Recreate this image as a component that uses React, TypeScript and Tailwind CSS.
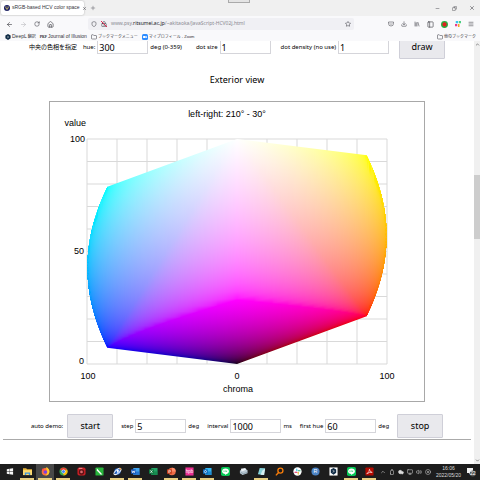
import React from "react";
import {
  ArrowLeft,
  ArrowRight,
  RotateCw,
  House,
  Shield,
  Star,
  Download,
  Menu,
  Minus,
  X,
  Plus,
  Folder,
  Library,
  PanelLeft,
  Copy,
  ChevronUp,
  ChevronDown,
  Cloud,
  Monitor,
  Volume2,
  Battery,
  CircleX,
  LockKeyhole,
} from "lucide-react";

const CENTER_HUE = 300;
const SIN60 = Math.sin(Math.PI / 3);

// fully saturated colour of a hue, in linear light
const pureColor = (hue: number) => {
  const h = (((hue % 360) + 360) % 360) / 60;
  const f = (n: number) => {
    const k = (n + h) % 6;
    return 1 - Math.max(0, Math.min(k, 4 - k, 1));
  };
  return [f(5), f(3), f(1)];
};

const luminance = (c: number[]) =>
  0.2126 * c[0] + 0.7152 * c[1] + 0.0722 * c[2];

const encode = (v: number) => {
  const c = Math.max(0, Math.min(1, v));
  const s = c <= 0.0031308 ? 12.92 * c : 1.055 * Math.pow(c, 1 / 2.4) - 0.055;
  return Math.round(s * 255);
};

const toCss = (c: number[]) => `rgb(${c.map(encode).join(",")})`;

const hueTable = Array.from({ length: 361 }, (_, i) => {
  const d = i - 180;
  const pure = pureColor(CENTER_HUE + d);
  return { sin: Math.sin((d * Math.PI) / 180), pure, lum: luminance(pure) };
});

const maxChroma = (lum: number, v: number) =>
  v <= lum ? v / lum : (1 - v) / (1 - lum);

// colour of the nearest surface point at (x, value)
const surfaceColor = (x: number, v: number) => {
  const dir = x < 0 ? -1 : 1;
  const target = Math.abs(x);
  let best = 0;
  let bestDist = Infinity;
  let prev = 0;
  let pos = 0;
  for (let i = 0; i <= 180; i++) {
    const e = hueTable[180 + dir * i];
    const f = maxChroma(e.lum, v) * Math.abs(e.sin);
    if (f >= target) {
      pos = i === 0 ? 0 : i - 1 + (target - prev) / (f - prev || 1);
      bestDist = 0;
      break;
    }
    if (target - f < bestDist) {
      bestDist = target - f;
      best = i;
    }
    prev = f;
  }
  if (bestDist > 0) pos = best;
  const pure = pureColor(CENTER_HUE + dir * pos);
  const lum = luminance(pure);
  const c = maxChroma(lum, v);
  return toCss(pure.map((p) => (v <= lum ? c * p : 1 - c * (1 - p))));
};

const valueRange = (x: number) => {
  const a = Math.abs(x);
  if (a <= SIN60) {
    const low = x < 0 ? 0.0722 : 0.2126;
    const high = x < 0 ? 0.7874 : 0.9278;
    return [(low * a) / SIN60, 1 - ((1 - high) * a) / SIN60];
  }
  const d = (Math.asin(a) * 180) / Math.PI;
  const dir = x < 0 ? -1 : 1;
  return [
    luminance(pureColor(CENTER_HUE + dir * d)),
    luminance(pureColor(CENTER_HUE + dir * (180 - d))),
  ];
};

const STOPS = 32;
const columns = Array.from({ length: 300 }, (_, i) => {
  const x = (i + 0.5 - 150) / 150;
  const [low, high] = valueRange(x);
  const stops = Array.from({ length: STOPS + 1 }, (_, k) => {
    const t = Math.pow(k / STOPS, 1.5);
    const v = low + (high - low) * Math.min(0.998, Math.max(0.002, t));
    return { offset: t, color: surfaceColor(x, v) };
  });
  // the blue-magenta-red ridge needs a stop of its own to stay sharp
  if (Math.abs(x) < SIN60) {
    const ridge = pureColor(CENTER_HUE + (Math.asin(x) * 180) / Math.PI);
    stops.push({
      offset: (luminance(ridge) - low) / (high - low),
      color: toCss(ridge),
    });
    stops.sort((a, b) => a.offset - b.offset);
  }
  return { i, low, high, stops };
});

const HcvChart = () => (
  <svg
    viewBox="0 0 376 301"
    className="block w-[376px]"
    fontFamily="'Liberation Sans', Arial, sans-serif"
    fontSize="9"
    fill="#000"
  >
    <rect x="0.5" y="0.5" width="375" height="300" fill="#fff" stroke="#a8a8a8" />
    <g stroke="#d9d9d9">
      {Array.from({ length: 11 }, (_, i) => (
        <g key={i}>
          <line x1={38 + i * 30} x2={38 + i * 30} y1="38" y2="263" />
          <line x1="38" x2="338" y1={38 + i * 22.5} y2={38 + i * 22.5} />
        </g>
      ))}
    </g>
    <defs>
      {columns.map((c) => (
        <linearGradient key={c.i} id={`col${c.i}`} x1="0" y1="1" x2="0" y2="0">
          {c.stops.map((s, k) => (
            <stop key={k} offset={s.offset} stopColor={s.color} />
          ))}
        </linearGradient>
      ))}
    </defs>
    {columns.map((c) => (
      <rect
        key={c.i}
        x={38 + c.i}
        y={263 - c.high * 225}
        width="1"
        height={(c.high - c.low) * 225}
        fill={`url(#col${c.i})`}
      />
    ))}
    <text x="178" y="16" textAnchor="middle">left-right: 210° - 30°</text>
    <text x="37" y="25" textAnchor="end">value</text>
    <text x="36" y="41" textAnchor="end">100</text>
    <text x="35" y="153" textAnchor="end">50</text>
    <text x="35" y="263" textAnchor="end">0</text>
    <text x="39" y="278" textAnchor="middle">100</text>
    <text x="188" y="278" textAnchor="middle">0</text>
    <text x="338" y="278" textAnchor="middle">100</text>
    <text x="189" y="291" textAnchor="middle">chroma</text>
  </svg>
);

type FieldProps = {
  id: string;
  label: string;
  value: string;
  unit?: string;
};

const Field = ({ id, label, value, unit }: FieldProps) => (
  <div className="flex items-center gap-[2px]">
    <label htmlFor={id} className="whitespace-nowrap">
      {label}
    </label>
    <input
      id={id}
      defaultValue={value}
      className="h-[14px] w-[51px] border border-[#d5d5da] bg-white px-px text-[9px] leading-3 text-black"
    />
    {unit && <span className="whitespace-nowrap">{unit}</span>}
  </div>
);

const PageButton = ({ children }: { children: React.ReactNode }) => (
  <button className="h-6 w-[46px] rounded-[1px] border border-[#cfcfd8] bg-[#e9e9ed] text-[9px] leading-3 text-black">
    {children}
  </button>
);

const LineIcon = () => (
  <>
    <rect width="10" height="10" rx="2" fill="#06c755" />
    <ellipse cx="5" cy="4.7" rx="3.7" ry="3" fill="#fff" />
    <path d="M4 7l1 2 3-3z" fill="#fff" />
    <path d="M3 4v1.4M4.2 4v1.4M5.3 5.4V4l1 1.4V4" stroke="#06c755" strokeWidth=".5" fill="none" />
  </>
);

const OfficeIcon = ({ dark, light, mark }: { dark: string; light: string; mark: string }) => (
  <>
    <rect x="2.5" y="1" width="7" height="8" rx=".6" fill={light} />
    <path d="M2.5 5h7v3.5q0 .5-.6.5H3z" fill={dark} opacity=".6" />
    <rect x="0" y="2.6" width="5.4" height="5" rx=".5" fill={dark} />
    <path d={mark} stroke="#fff" strokeWidth=".8" fill="none" />
  </>
);

const taskbarApps = [
  {
    name: "Start",
    icon: <path d="M2 2.4l2.8-.4v2.8H2zM5.2 1.9L9 1.4v3.4H5.2zM2 5.2h2.8V8L2 7.6zM5.2 5.2H9v3.4l-3.8-.5z" fill="#f5f5f5" />,
  },
  {
    name: "Explorer",
    open: true,
    icon: (
      <>
        <path d="M0 1.5h3.500l1 1H10V9H0z" fill="#e8b53c" />
        <path d="M0 3.500h10V9H0z" fill="#ffd96b" />
        <path d="M2 9V6h6v3H6.500V7.500h-3V9z" fill="#3a96dd" />
      </>
    ),
  },
  {
    name: "Firefox",
    open: true,
    active: true,
    icon: (
      <>
        <circle cx="5" cy="5.200" r="4.200" fill="#ff7139" />
        <path d="M6 0q3.600 2 3.400 5.500Q8.500 9.500 5 9.500 8 7 6.500 4 5.500 2 6 0z" fill="#ffca28" />
        <circle cx="4.800" cy="5.600" r="2" fill="#7b3fe4" />
        <path d="M.8 3L2 1.500l1 1.500 2 .5-1.500 1z" fill="#ff3b55" />
      </>
    ),
  },
  {
    name: "Chrome",
    open: true,
    icon: (
      <>
        <circle cx="5" cy="5" r="4.500" fill="#34a853" />
        <path d="M5 5L1.100 2.750A4.500 4.500 0 0 1 8.900 2.750z" fill="#ea4335" />
        <path d="M5 5l3.900-2.250A4.500 4.500 0 0 1 5 9.500z" fill="#fbbc05" />
        <circle cx="5" cy="5" r="2.200" fill="#fff" />
        <circle cx="5" cy="5" r="1.700" fill="#4285f4" />
      </>
    ),
  },
  {
    name: "Camera",
    icon: (
      <>
        <rect x=".5" y=".5" width="9" height="9" rx="2" fill="#c81e24" />
        <circle cx="5" cy="5.500" r="3" fill="#5a1215" />
        <circle cx="5" cy="5.500" r="1.500" fill="#d9696d" />
        <path d="M2 1.500h4" stroke="#ffc1c1" strokeWidth=".8" />
      </>
    ),
  },
  {
    name: "Editor",
    icon: (
      <>
        <rect x=".5" y=".5" width="9" height="9" rx="1" fill="#27b43b" />
        <path d="M2 1.500l6 6.500-1.500.5L2 4z" fill="#fff" />
      </>
    ),
  },
  {
    name: "Mail",
    open: true,
    icon: (
      <>
        <circle cx="5" cy="5" r="3.500" fill="#2869c9" />
        <ellipse cx="5" cy="5" rx="4.800" ry="2" transform="rotate(-40 5 5)" fill="none" stroke="#e7eef8" strokeWidth="1.200" />
        <path d="M4 3l3 1-2 3z" fill="#fff" />
        <circle cx="8" cy="2" r="1" fill="#f29a2e" />
      </>
    ),
  },
  { name: "Word", open: true, icon: <OfficeIcon dark="#185abd" light="#41a5ee" mark="M1 4l.8 2.400.9-2 .9 2L4.400 4" /> },
  { name: "Excel", icon: <OfficeIcon dark="#107c41" light="#21a366" mark="M1.600 3.700l2.200 2.800M3.800 3.700L1.600 6.500" /> },
  {
    name: "PowerPoint",
    open: true,
    icon: (
      <>
        <circle cx="5.500" cy="5" r="4.200" fill="#ed6c47" />
        <path d="M5.500.8a4.200 4.200 0 0 1 4.200 4.200H5.500z" fill="#ff8f6b" />
        <rect x="0" y="2.600" width="5.400" height="5" rx=".5" fill="#c43e1c" />
        <path d="M2 6.600V3.700h1q1 0 1 .9t-1 .9H2" stroke="#fff" strokeWidth=".7" fill="none" />
      </>
    ),
  },
  {
    name: "hpb",
    open: true,
    icon: (
      <>
        <rect x=".500" y=".500" width="9" height="9" fill="#ec2f92" />
        <text x="5" y="6.800" textAnchor="middle" fontSize="5" fill="#fff">hpb</text>
      </>
    ),
  },
  { name: "Outlook", open: true, icon: <OfficeIcon dark="#0f6cbd" light="#35b8f1" mark="M2.700 3.800a1.200 1.300 0 1 0 .01 0" /> },
  { name: "LINE", icon: <LineIcon /> },
  {
    name: "Printer",
    icon: (
      <>
        <path d="M1 4l6-2 2.500 1.500V7L4 9 1 7z" fill="#b9c8d3" />
        <path d="M2 2l5-1 1 2-5 2z" fill="#edf3f7" />
        <path d="M2 6l3 1.500L9 6" stroke="#66808f" strokeWidth=".6" fill="none" />
      </>
    ),
  },
  {
    name: "Notepad",
    open: true,
    icon: (
      <>
        <path d="M3 1l6 .5L7.500 9 1 8z" fill="#86d0d8" />
        <path d="M6 4l3-2-1 7-4-.5z" fill="#d9f1f3" />
      </>
    ),
  },
  {
    name: "Search",
    icon: (
      <>
        <circle cx="6" cy="4" r="2.800" fill="none" stroke="#f57c0a" strokeWidth="1.500" />
        <path d="M4 6L1 9.300" stroke="#f57c0a" strokeWidth="1.600" />
      </>
    ),
  },
  {
    name: "Slack",
    icon: (
      <>
        <circle cx="5" cy="5" r="4.600" fill="#fff" />
        <g strokeWidth="1.200" strokeLinecap="round">
          <path d="M4.200 2.200v2" stroke="#36c5f0" />
          <path d="M5.800 4.200h2" stroke="#2eb67d" />
          <path d="M5.800 5.900v2" stroke="#ecb22e" />
          <path d="M2.200 5.800h2" stroke="#e01e5a" />
        </g>
      </>
    ),
  },
  {
    name: "R",
    icon: (
      <>
        <circle cx="5" cy="5" r="4.500" fill="#4c83c3" />
        <text x="5" y="7.200" textAnchor="middle" fontSize="6" fill="#fff">R</text>
      </>
    ),
  },
  {
    name: "DeepL",
    icon: (
      <>
        <rect x=".5" y=".5" width="9" height="9" fill="#fff" />
        <path d="M5 1.200l3 1.700v3.400L5 8.600 2 6.300V2.900z" fill="#0f2b46" />
        <path d="M4 3.700l2 1-2 1.200" stroke="#fff" strokeWidth=".6" fill="none" />
      </>
    ),
  },
  { name: "LINE chat", open: true, icon: <LineIcon /> },
  {
    name: "Acrobat",
    open: true,
    icon: (
      <>
        <rect x=".5" y=".5" width="9" height="9" rx="1" fill="#b30b00" />
        <path d="M2 7.500Q5 5.500 5 2.500q0 3 3 3.500-3-.5-6 1.500z" stroke="#fff" strokeWidth=".7" fill="none" />
      </>
    ),
  },
];

const PsyLogo = () => (
  <svg viewBox="0 0 8 8" className="size-[6px] shrink-0">
    <circle cx="4" cy="4" r="4" fill="#141a66" />
    <path d="M2 2v1.500q0 1.500 2 1.500t2-1.500V2M4 1.500V7" stroke="#d8c766" strokeWidth=".9" fill="none" />
  </svg>
);

const BrowserChrome = () => (
  <header className="h-[41px] shrink-0 bg-[#f9f9fb] font-['Liberation_Sans','Noto_Sans_CJK_JP',sans-serif] text-[#33333a]">
    <div className="relative flex h-4 items-center bg-[#f0f0f0]">
      <div className="ml-px flex h-[14px] w-[83px] items-center gap-[2px] rounded-[2px] bg-white px-[3px] shadow-[0_0_2px_#aaa]">
        <PsyLogo />
        <span className="flex-1 whitespace-nowrap text-[5px]">sRGB-based HCV color space</span>
        <button aria-label="Close tab">
          <X className="size-[5px]" />
        </button>
      </div>
      <button aria-label="New tab" className="ml-[6px]">
        <Plus className="size-[6px]" strokeWidth={1.5} />
      </button>
      <div className="absolute left-[228px] top-0 h-[3px] w-[22px] border border-t-0 border-[#aaa] bg-[#e4e4e4]" />
      <div className="ml-auto flex items-center gap-3 pr-[5px]">
        <button aria-label="Minimize"><Minus className="size-[5px]" /></button>
        <button aria-label="Restore"><Copy className="size-[5px] -scale-x-100" /></button>
        <button aria-label="Close"><X className="size-[6px]" /></button>
      </div>
    </div>
    <div className="flex h-4 items-center px-[6px]">
      <div className="flex items-center gap-[7px]">
        <button aria-label="Back"><ArrowLeft className="size-[7px]" /></button>
        <button aria-label="Forward"><ArrowRight className="size-[7px] text-[#b8b8bd]" /></button>
        <button aria-label="Reload"><RotateCw className="size-[6px]" /></button>
        <button aria-label="Home"><House className="size-[7px]" /></button>
      </div>
      <div className="ml-[34px] flex h-3 flex-1 items-center rounded-[2px] bg-[#f0f0f4] px-[3px]">
        <Shield className="size-[6px]" />
        <span className="relative ml-1">
          <LockKeyhole className="size-[6px]" />
          <svg viewBox="0 0 6 6" className="absolute inset-0 size-[6px]">
            <path d="M0 0l6 6" stroke="#e22850" />
          </svg>
        </span>
        <span className="ml-1 whitespace-nowrap font-['Noto_Sans',sans-serif] text-[5px] text-[#8a8a92]">
          www.psy.<span className="text-[#15141a]">ritsumei.ac.jp</span>/~akitaoka/JavaScript-HCV02j.html
        </span>
        <Star className="ml-auto size-[6px]" />
      </div>
      <div className="ml-[34px] flex items-center gap-[7px]">
        <button aria-label="Pocket">
          <svg viewBox="0 0 12 12" className="size-[6px]" fill="none" stroke="currentColor">
            <path d="M1 2h10v3a5 5 0 0 1-10 0zM3.500 4.500L6 7l2.500-2.500" />
          </svg>
        </button>
        <button aria-label="Downloads"><Download className="size-[6px]" /></button>
        <button aria-label="Library"><Library className="size-[6px]" /></button>
        <button aria-label="Sidebars"><PanelLeft className="size-[7px]" /></button>
        <button aria-label="Blocker">
          <svg viewBox="0 0 8 8" className="size-[7px]">
            <circle cx="4" cy="4" r="3.200" fill="#e02020" stroke="#25b040" strokeWidth="1.500" />
          </svg>
        </button>
        <button aria-label="Extension">
          <svg viewBox="0 0 8 8" className="size-[6px]">
            <rect x="1" width="3" height="3" fill="#36c5f0" />
            <rect x="5" y="0" width="3" height="3" fill="#4bcf80" />
            <rect x="0" y="4" width="3" height="3" fill="#e83e8c" />
            <rect x="4" y="4" width="2" height="4" fill="#f5a623" />
          </svg>
        </button>
        <button aria-label="Menu"><Menu className="size-[6px]" /></button>
      </div>
    </div>
    <nav className="flex h-[9px] items-center gap-1 pl-[5px] pr-1 text-[4px] leading-[9px] whitespace-nowrap">
      <a href="#" className="flex items-center gap-px">
        <svg viewBox="0 0 8 8" className="size-[6px]">
          <path d="M4 0l3.500 2v3.500L4 8 .5 5.500V2z" fill="#0f2b46" />
          <path d="M3 3l2 1-2 1" stroke="#fff" strokeWidth=".6" fill="none" />
        </svg>
        <span className="text-[5px]">DeepL</span>翻訳
      </a>
      <a href="#" className="flex items-center gap-px">
        <span className="font-serif text-[4px] font-bold">PKF</span>
        <span className="text-[5px]">Journal of Illusion</span>
      </a>
      <a href="#" className="flex items-center gap-px">
        <Folder className="size-[6px]" />
        ブックマークメニュー
      </a>
      <a href="#" className="flex items-center gap-px">
        <svg viewBox="0 0 8 8" className="size-[6px]">
          <rect width="8" height="8" rx="2" fill="#2d8cff" />
          <path d="M1.500 2.800h3.300v2.600H1.500zM5.200 3.700l1.400-.9v2.600l-1.400-.9z" fill="#fff" />
        </svg>
        マイプロフィール - Zoom
      </a>
      <a href="#" className="ml-auto flex items-center gap-px">
        <Folder className="size-[6px]" />
        他のブックマーク
      </a>
    </nav>
  </header>
);

const Taskbar = () => (
  <footer className="flex h-4 shrink-0 items-stretch bg-[#1d1d1d] font-['Liberation_Sans',sans-serif] text-[#dcdcdc]">
    {taskbarApps.map((app) => (
      <button
        key={app.name}
        aria-label={app.name}
        className={`flex w-[18px] shrink-0 flex-col items-center justify-between pt-[3px] ${
          app.active ? "bg-[#484848]" : ""
        }`}
      >
        <svg viewBox="0 0 10 10" className="size-[9px]">
          {app.icon}
        </svg>
        <span className={`h-[2px] w-[14px] ${app.open ? "bg-[#e8cf80]" : ""}`} />
      </button>
    ))}
    <div className="flex flex-1 items-center gap-[3px] pl-[2px]">
      <ChevronUp className="size-[6px]" />
      <Battery className="size-[6px] -rotate-90" />
      <Cloud className="size-[6px]" fill="currentColor" />
      <Monitor className="size-[6px]" />
      <Volume2 className="size-[6px]" />
      <CircleX className="size-[6px]" />
      <div className="mx-auto text-center text-[5px] leading-[7px]">
        <div>16:06</div>
        <div>2022/05/20</div>
      </div>
      <button aria-label="Notifications" className="mr-1">
        <svg viewBox="0 0 10 10" className="size-[10px]">
          <path d="M1 1h6v5H4L3 7.500V6H1z" fill="#f0f0f0" />
          <circle cx="6.800" cy="6.500" r="3" fill="#555" />
          <text x="6.800" y="8.300" textAnchor="middle" fontSize="5" fill="#fff">22</text>
        </svg>
      </button>
    </div>
  </footer>
);

export default function App() {
  return (
    <div className="flex min-h-screen flex-col bg-white font-['Noto_Sans','Noto_Sans_CJK_JP',sans-serif] text-black">
      <BrowserChrome />
      <div className="flex flex-1">
        <main className="min-w-0 flex-1 text-[6px]">
          {/* the controls row is scrolled partly under the toolbar */}
          <div className="flex h-[18px] items-end justify-center overflow-hidden">
            <div className="flex h-6 shrink-0 items-center justify-center gap-[10px]">
              <div className="mr-1 flex items-center gap-[6px]">
                <span className="whitespace-nowrap">中央の色相を指定</span>
                <Field id="hue" label="hue:" value="300" unit="deg (0-359)" />
              </div>
              <Field id="dot-size" label="dot size" value="1" />
              <Field id="dot-density" label="dot density (no use)" value="1" />
              <PageButton>draw</PageButton>
            </div>
          </div>
          <h2 className="mt-[15px] text-center text-[9px] leading-3">Exterior view</h2>
          <div className="mt-[15px] flex justify-center">
            <HcvChart />
          </div>
          <div className="mt-3 flex items-center justify-center gap-[8px]">
            <div className="flex items-center gap-1">
              <span className="whitespace-nowrap">auto demo:</span>
              <PageButton>start</PageButton>
            </div>
            <Field id="step" label="step" value="5" unit="deg" />
            <Field id="interval" label="interval" value="1000" unit="ms" />
            <Field id="first-hue" label="first hue" value="60" unit="deg" />
            <PageButton>stop</PageButton>
          </div>
          <hr className="mx-[3px] mt-px border-[#aaa]" />
        </main>
        <div className="flex w-[6px] flex-col items-center bg-[#f0f0f0] py-px text-[#555]">
          <ChevronUp className="size-[5px]" strokeWidth={3} />
          <div className="flex w-full flex-1 flex-col">
            <div className="flex-[128]" />
            <div className="h-16 bg-[#cdcdcd]" />
            <div className="flex-[219]" />
          </div>
          <ChevronDown className="size-[5px]" strokeWidth={3} />
        </div>
      </div>
      <Taskbar />
    </div>
  );
}
